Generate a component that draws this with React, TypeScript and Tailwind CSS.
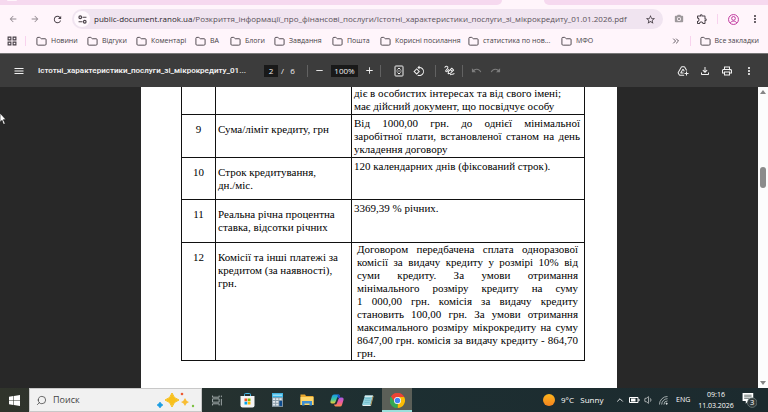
import type { ReactNode } from 'react'
import {
  MdAdd,
  MdAddToDrive,
  MdArrowBack,
  MdArrowForward,
  MdMenu,
  MdMoreVert,
  MdOutlineExtension,
  MdOutlineFileDownload,
  MdOutlinePrint,
  MdOutlineRotate90DegreesCcw,
  MdPhotoCamera,
  MdRedo,
  MdRefresh,
  MdRemove,
  MdStarBorder,
  MdUndo,
} from 'react-icons/md'
import { ChevronUp, ChevronsRight, Folder, Search, Volume1 } from 'lucide-react'

const BOOKMARKS = [
  { label: 'Новини', width: 'w-[51px]' },
  { label: 'Відгуки', width: 'w-[49px]' },
  { label: 'Коментарі', width: 'w-[59px]' },
  { label: 'ВА', width: 'w-[35px]' },
  { label: 'Блоги', width: 'w-[44px]' },
  { label: 'Завдання', width: 'w-[58px]' },
  { label: 'Пошта', width: 'w-[48px]' },
  { label: 'Корисні посилання', width: 'w-[88px]' },
  { label: 'статистика по нов...', width: 'w-[93px]' },
  { label: 'МФО', width: 'w-[40px]' },
]

const ROWS = [
  {
    num: '',
    height: 'h-[27px]',
    pad: 'pt-0 pl-[2px] pr-1',
    title: [],
    text: ['діє в особистих інтересах та від свого імені;', 'має дійсний документ, що посвідчує особу'],
    justify: false,
  },
  {
    num: '9',
    height: 'h-[43px]',
    pad: 'pt-[2px] pl-[2px] pr-1',
    title: ['Сума/ліміт кредиту, грн'],
    text: ['Від 1000,00 грн. до однієї мінімальної', 'заробітної плати, встановленої станом на день', 'укладення договору'],
    justify: true,
  },
  {
    num: '10',
    height: 'h-[42px]',
    pad: 'pt-[2px] pl-[2px] pr-1',
    title: ['Строк кредитування,', 'дн./міс.'],
    text: ['120 календарних днів (фіксований строк).'],
    justify: false,
  },
  {
    num: '11',
    height: 'h-[43px]',
    pad: 'pt-[2px] pl-[2px] pr-1',
    title: ['Реальна річна процентна', 'ставка, відсотки річних'],
    text: ['3369,39 % річних.'],
    justify: false,
  },
  {
    num: '12',
    height: 'h-[117px]',
    pad: 'pt-0 pl-[5px] pr-[6px]',
    title: ['Комісії та інші платежі за', 'кредитом (за наявності),', 'грн.'],
    text: [
      'Договором передбачена сплата одноразової',
      'комісії за видачу кредиту у розмірі 10% від',
      'суми кредиту. За умови отримання',
      'мінімального розміру кредиту на суму',
      '1 000,00 грн. комісія за видачу кредиту',
      'становить 100,00 грн. За умови отримання',
      'максимального розміру мікрокредиту на суму',
      '8647,00 грн. комісія за видачу кредиту - 864,70',
      'грн.',
    ],
    justify: true,
  },
]

function IconButton({ label, className = 'w-[22px]', children }: { label: string; className?: string; children: ReactNode }) {
  return (
    <button aria-label={label} className={`flex h-5 shrink-0 items-center justify-center ${className}`}>
      {children}
    </button>
  )
}

export default function App() {
  return (
    <div className="flex h-screen flex-col overflow-hidden bg-[#fff5fb] font-['Open_Sans','Noto_Sans',sans-serif]">
      <TabStrip />
      <AddressBar />
      <BookmarksBar />
      <PdfToolbar />
      <div className="flex min-h-0 flex-1 bg-[#282828]">
        <PdfPage />
        <Scrollbar />
      </div>
      <Taskbar />
    </div>
  )
}

function TabStrip() {
  return (
    <div className="flex h-[5px] shrink-0">
      <div className="flex flex-[500] items-start rounded-br-md bg-[#f6d9ef] pl-[7px]">
        <div className="h-px w-[10px] rounded-b bg-[#fff5fb]" />
      </div>
      <div className="flex-[42]" />
      <div className="flex-[226] rounded-bl-md bg-[#f6d9ef]" />
    </div>
  )
}

function AddressBar() {
  return (
    <div className="flex h-7 shrink-0 items-center pr-0.5 pl-0.5 text-[#4b434a]">
      <IconButton label="Назад">
        <MdArrowBack className="size-[10px] text-[#948b92]" />
      </IconButton>
      <IconButton label="Вперед">
        <MdArrowForward className="size-[10px] text-[#948b92]" />
      </IconButton>
      <IconButton label="Оновити">
        <MdRefresh className="size-[11px]" />
      </IconButton>
      <div className="ml-1 flex h-5 min-w-0 flex-1 items-center rounded-full bg-[#f0e4f0] px-[2px]">
        <button aria-label="Дані сайту" className="flex size-4 shrink-0 items-center justify-center rounded-full bg-[#fff9fd]">
          <svg viewBox="0 0 16 16" className="size-[9px]" fill="none" stroke="currentColor" strokeWidth="2">
            <circle cx="4" cy="4" r="2.4" />
            <path d="M8 4h7M1 12h7" />
            <circle cx="12" cy="12" r="2.4" />
          </svg>
        </button>
        <p className="ml-1 min-w-0 flex-1 overflow-hidden text-[8px] leading-4 whitespace-nowrap text-[#5a525a]">
          <span className="text-[#2c272d]">public-document.ranok.ua</span>
          /Розкриття_інформації_про_фінансові_послуги/Істотні_характеристики_послуги_зі_мікрокредиту_01.01.2026.pdf
        </p>
        <IconButton label="Додати закладку">
          <MdStarBorder className="size-[11px]" />
        </IconButton>
      </div>
      <IconButton label="Знімок екрана" className="ml-1 w-6">
        <MdPhotoCamera className="size-[10px] text-[#9d989b]" />
      </IconButton>
      <IconButton label="Розширення">
        <MdOutlineExtension className="size-3" />
      </IconButton>
      <div className="mx-1 h-[10px] w-px bg-[#f8d3ee]" />
      <IconButton label="Профіль">
        <svg viewBox="0 0 20 20" className="size-[11px]" fill="none" stroke="#c0399f" strokeWidth="1.8">
          <circle cx="10" cy="10" r="9" />
          <circle cx="10" cy="8" r="3.4" />
          <path d="M4 16c3-4 9-4 12 0" />
        </svg>
      </IconButton>
      <IconButton label="Меню">
        <MdMoreVert className="size-3" />
      </IconButton>
    </div>
  )
}

function BookmarksBar() {
  return (
    <nav className="flex h-5 shrink-0 items-center pb-1 text-[7px] leading-4 text-[#463f46]">
      <button aria-label="Програми" className="ml-[7px] shrink-0">
        <svg viewBox="0 0 18 18" className="size-[10px]" fill="none" stroke="currentColor" strokeWidth="2">
          <path d="M2 2h5v5H2zM11 2h5v5h-5zM2 11h5v5H2zM11 11h5v5h-5z" />
        </svg>
      </button>
      <div className="mx-2 h-[10px] w-px shrink-0 bg-[#f8d3ee]" />
      <div className="ml-0.5 flex min-w-0 flex-1 overflow-hidden">
        {BOOKMARKS.map(({ label, width }) => (
          <a key={label} href="#" className={`flex shrink-0 items-center gap-1 whitespace-nowrap ${width}`}>
            <Folder className="size-[11px] shrink-0" strokeWidth={2} />
            {label}
          </a>
        ))}
      </div>
      <button aria-label="Більше закладок">
        <ChevronsRight className="size-[10px]" />
      </button>
      <div className="mx-[9px] h-[10px] w-px bg-[#f8d3ee]" />
      <a href="#" className="flex items-center gap-1 pr-[9px] whitespace-nowrap">
        <Folder className="size-[11px]" strokeWidth={2} />
        Все закладки
      </a>
    </nav>
  )
}

function PdfToolbar() {
  return (
    <header className="flex h-[34px] shrink-0 items-center border-t border-[#777] bg-[#3c3c3c] pr-2 pl-2 text-[8px] text-[#f1f1f1]">
      <IconButton label="Меню документа">
        <MdMenu className="size-3" />
      </IconButton>
      <h1 className="ml-2 w-[222px] shrink-0 font-[Roboto,sans-serif] text-[8px] font-semibold whitespace-nowrap">
        Істотні_характеристики_послуги_зі_мікрокредиту_01...
      </h1>
      <input aria-label="Сторінка" defaultValue="2" className="ml-1 h-3 w-[14px] bg-[#191919] text-center" />
      <span className="ml-[3px] w-[26px] whitespace-pre">/   6</span>
      <Divider />
      <IconButton label="Зменшити">
        <MdRemove className="size-[11px]" />
      </IconButton>
      <input aria-label="Масштаб" defaultValue="100%" className="ml-px h-3 w-[27px] bg-[#191919] text-center font-medium" />
      <IconButton label="Збільшити">
        <MdAdd className="size-[11px]" />
      </IconButton>
      <Divider />
      <IconButton label="За розміром сторінки" className="ml-2 w-5">
        <svg viewBox="0 0 20 24" className="h-3 w-[10px]" fill="none" stroke="currentColor" strokeWidth="2">
          <rect x="2" y="2" width="16" height="20" rx="1.5" />
          <path d="m7 9 3-3 3 3M7 15l3 3 3-3M5 12h2M9 12h2M13 12h2" />
        </svg>
      </IconButton>
      <IconButton label="Повернути" className="w-[19px]">
        <MdOutlineRotate90DegreesCcw className="size-3" />
      </IconButton>
      <div className="w-[7px]" />
      <Divider />
      <IconButton label="Малювати" className="w-[26px]">
        <svg viewBox="0 0 24 24" className="size-[11px]" fill="none" stroke="currentColor" strokeWidth="2.2" strokeLinecap="round" strokeLinejoin="round">
          <path d="M2 5c3-4 8-2 6 2-1 3-6 4-4 7 2 2 4-1 6-4" />
          <path d="m9 19 1-5 7-7 4 4-7 7zM14 10l4 4" />
          <path d="M14 21c3-2 5 1 8-2" />
        </svg>
      </IconButton>
      <Divider />
      <IconButton label="Скасувати" className="ml-[3px] w-5">
        <MdUndo className="size-[11px] text-[#7d7d7d]" />
      </IconButton>
      <IconButton label="Повторити" className="w-[18px]">
        <MdRedo className="size-[11px] text-[#7d7d7d]" />
      </IconButton>
      <div className="flex-1" />
      <IconButton label="Зберегти на Диск">
        <MdAddToDrive className="size-3" />
      </IconButton>
      <IconButton label="Завантажити">
        <MdOutlineFileDownload className="size-3" />
      </IconButton>
      <IconButton label="Друк">
        <MdOutlinePrint className="size-3" />
      </IconButton>
      <IconButton label="Більше дій">
        <MdMoreVert className="size-3" />
      </IconButton>
    </header>
  )
}

function Divider() {
  return <div className="h-3 w-px shrink-0 bg-[#626262]" />
}

function PdfPage() {
  return (
    <main className="flex min-w-0 flex-1 justify-center overflow-hidden">
      <div className="flex w-[476px] shrink-0 items-start bg-white pl-10">
        <table className="w-[404px] table-fixed border-collapse font-['Liberation_Serif',serif] text-[11px] leading-[13px] text-black">
          <colgroup>
            <col className="w-[34px]" />
            <col className="w-[136px]" />
            <col className="w-[233px]" />
          </colgroup>
          <tbody>
            {ROWS.map(({ num, height, pad, title, text, justify }) => (
              <tr key={num} className={`align-top ${height}`}>
                <td className="border border-t-0 border-[#111] p-0 pt-2 text-center">{num}</td>
                <td className="border border-t-0 border-[#111] p-0 pt-2 pl-[2px]">
                  {title.map((line) => (
                    <span key={line} className="block whitespace-nowrap">
                      {line}
                    </span>
                  ))}
                </td>
                <td className={`border border-t-0 border-[#111] ${pad}`}>
                  {text.map((line, i) => (
                    <span
                      key={line}
                      className={justify && i < text.length - 1 ? 'block [text-align-last:justify]' : 'block whitespace-nowrap'}
                    >
                      {line}
                    </span>
                  ))}
                </td>
              </tr>
            ))}
          </tbody>
        </table>
      </div>
      <svg viewBox="0 0 12 18" className="absolute top-[113px] left-0 h-3 w-2">
        <path d="M0 0v14l3-3 2 6 3-1-3-6h4z" fill="#fff" stroke="#111" />
      </svg>
    </main>
  )
}

function Scrollbar() {
  return (
    <div className="flex w-[10px] shrink-0 flex-col items-center bg-[#fcfcfc] py-[3px]">
      <svg viewBox="0 0 6 4" className="h-1 w-[6px]">
        <path d="M3 0l3 4H0z" fill="#858585" />
      </svg>
      <div className="mt-[73px] h-[21px] w-[6px] rounded-full bg-[#8b8b8b]" />
      <div className="flex-1" />
      <svg viewBox="0 0 6 4" className="h-1 w-[6px]">
        <path d="M0 0h6L3 4z" fill="#858585" />
      </svg>
    </div>
  )
}

function TaskIcon({ label, children }: { label: string; children: ReactNode }) {
  return (
    <button aria-label={label} className="flex h-6 w-[30px] shrink-0 items-center justify-center">
      {children}
    </button>
  )
}

function Taskbar() {
  return (
    <footer className="flex h-6 shrink-0 items-center bg-linear-to-r from-[#30342b] via-[#1d2f32] to-[#1c2a2e] text-[7px] text-white">
      <button aria-label="Пуск" className="flex w-[29px] shrink-0 justify-center">
        <svg viewBox="0 0 20 20" className="size-[11px]" fill="#fff">
          <path d="M0 3l8-1.200v7.700H0zM9 1.600 20 0v9.500H9zM0 10.500h8v7.700L0 17zM9 10.500h11V20L9 18.400z" />
        </svg>
      </button>
      <label className="flex h-6 w-[173px] shrink-0 items-center border border-[#c8c8c8] bg-[#f1f1f1] pl-[6px] text-[#333]">
        <Search className="size-[11px] shrink-0 -scale-x-100" strokeWidth={1.5} />
        <input aria-label="Поиск" placeholder="Поиск" className="ml-[6px] w-20 min-w-0 flex-1 bg-transparent text-[9px] placeholder:text-[#444]" />
        <svg viewBox="0 0 38 18" className="mr-[6px] h-[18px] w-[38px] shrink-0">
          <path d="M15 2q1.500 5.500 7 7-5.500 1.500-7 7-1.500-5.500-7-7 5.500-1.500 7-7" fill="#f8c01c" stroke="#f8c01c" strokeWidth="1" strokeLinejoin="round" />
          <path d="M28 7q1 3 4 4-3 1-4 4-1-3-4-4 3-1 4-4" fill="#f8bd34" />
          <path d="M3 11q1 2 3 3-2 1-3 3-1-2-3-3 2-1 3-3" fill="#1b9de2" stroke="#1b9de2" strokeWidth=".6" />
          <circle cx="25" cy="3" r="1.300" fill="#ed5a32" />
          <circle cx="36" cy="15" r="1.200" fill="#7cc142" />
        </svg>
      </label>
      <TaskIcon label="Подання завдань">
        <svg viewBox="0 0 20 20" className="size-[11px]" fill="none" stroke="#b9c1c1" strokeWidth="1.500">
          <path d="M1 1v3h12V1M1 19v-3h12v3M1 7h12v6H1zM17 1v3M17 7v12" />
        </svg>
      </TaskIcon>
      <TaskIcon label="Microsoft Store">
        <svg viewBox="0 0 30 30" className="size-[15px]">
          <path d="M9 7V3q0-2 2-2h8q2 0 2 2v4" fill="none" stroke="#45b9e8" strokeWidth="2" />
          <path d="M1 6h28v19q0 4-4 4H5q-4 0-4-4z" fill="#f4f4f4" />
          <path d="M9 11h5.500v5.500H9z" fill="#f25022" />
          <path d="M15.500 11H21v5.500h-5.500z" fill="#7fba00" />
          <path d="M9 17.500h5.500V23H9z" fill="#00a4ef" />
          <path d="M15.500 17.500H21V23h-5.500z" fill="#ffb900" />
        </svg>
      </TaskIcon>
      <TaskIcon label="Калькулятор">
        <svg viewBox="0 0 24 30" className="h-[14px] w-[11px]">
          <path d="M0 0h24v30H0z" fill="#8a9ca8" />
          <path d="M0 0h24v9H0z" fill="#3cb7e8" />
          <path d="M2 3h20v3H2z" fill="#a4e2f7" />
          <path d="M2 11h5v4H2zM9 11h5v4H9zM16 11h5v4h-5zM2 17h5v4H2zM9 17h5v4H9zM2 23h5v4H2zM9 23h5v4H9z" fill="#e3e9ee" />
          <path d="M16 17h6v11h-6z" fill="#0d4c8f" />
        </svg>
      </TaskIcon>
      <TaskIcon label="Провідник">
        <svg viewBox="0 0 28 24" className="h-3 w-[14px]">
          <path d="M1 1h9l2 3h14q1 0 1 1v17H1z" fill="#e8a72e" />
          <path d="M1 6h26v16H1z" fill="#ffd76a" />
          <path d="M4 14h20v9h-5v-4h-10v4H4z" fill="#3f8fd2" />
        </svg>
      </TaskIcon>
      <TaskIcon label="Copilot">
        <svg viewBox="0 0 28 26" className="h-[13px] w-[14px]">
          <defs>
            <linearGradient id="copilotLeft" x1="0" y1="0" x2="0" y2="1">
              <stop offset="0" stopColor="#1597e8" />
              <stop offset=".55" stopColor="#3fc6a0" />
              <stop offset="1" stopColor="#f5cf2d" />
            </linearGradient>
            <linearGradient id="copilotRight" x1="0" y1="0" x2="0" y2="1">
              <stop offset="0" stopColor="#a55be6" />
              <stop offset=".5" stopColor="#ec5a9e" />
              <stop offset="1" stopColor="#fb8b45" />
            </linearGradient>
          </defs>
          <path d="M8 1h9q2 0 3 4h-3q-2 0-3 3l-3 8q-1 3-4 3H4q-4 0-3-5L4 4q1-3 4-3" fill="url(#copilotLeft)" />
          <path d="M20 25h-9q-2 0-3-4h3q2 0 3-3l3-8q1-3 4-3h3q4 0 3 5l-3 10q-1 3-4 3" fill="url(#copilotRight)" />
          <path d="M15 1h2q2 0 3 4l1 3h-5z" fill="#2448c4" />
        </svg>
      </TaskIcon>
      <TaskIcon label="Блокнот">
        <svg viewBox="0 0 26 26" className="size-[13px]">
          <path d="M8 3h16l-5 19H2z" fill="#8fd0dc" />
          <path d="M8 3h16l-1 3H7z" fill="#d9eef0" />
          <path d="m24 3 1 2-5 19-1-2z" fill="#d6a65c" />
          <path d="m2 22 17 0 1 2H4z" fill="#e6eded" />
          <path d="M9 9h10M8 13h10M7 17h10" stroke="#60adbe" />
        </svg>
      </TaskIcon>
      <button aria-label="Google Chrome" className="flex h-6 w-[30px] shrink-0 items-center justify-center border-b-2 border-[#9be0dc] bg-[#5b5f58]">
        <svg viewBox="0 0 30 30" className="mt-[2px] size-[15px]">
          <path d="M15 15 2 7.500A15 15 0 0 1 28 7.500z" fill="#ea4335" />
          <path d="M15 15 28 7.500A15 15 0 0 1 15 30z" fill="#fbbc05" />
          <path d="M15 15v15A15 15 0 0 1 2 7.500z" fill="#34a853" />
          <path d="M15 8h13l-6.500 11z" fill="#fbbc05" />
          <path d="M15 8h13.300Q24 0 15 0 6.500 0 2 7.500L9 18z" fill="#ea4335" />
          <path d="m2 7.500 7 11.500 6 3-3 8A15 15 0 0 1 2 7.500" fill="#34a853" />
          <circle cx="15" cy="15" r="7" fill="#fff" />
          <circle cx="15" cy="15" r="5.500" fill="#4285f4" />
        </svg>
      </button>
      <div className="flex-1" />
      <div className="size-3 shrink-0 rounded-full bg-linear-to-b from-[#fdb51b] to-[#f5831f]" />
      <span className="ml-[6px] w-[53px] shrink-0 text-[8px] whitespace-pre">9°C   Sunny</span>
      <button aria-label="Приховані піктограми" className="ml-px w-[14px]">
        <ChevronUp className="size-[10px]" strokeWidth={2} />
      </button>
      <svg viewBox="0 0 22 12" className="h-[6px] w-[11px] shrink-0">
        <path d="M1 1h17v10H1z" fill="none" stroke="#fff" strokeWidth="2" />
        <path d="M4 3h9v6H4zM19 4h2v4h-2z" fill="#fff" />
      </svg>
      <Volume1 className="ml-1 size-[10px] shrink-0" strokeWidth={1.5} />
      <svg viewBox="0 0 20 20" className="ml-[5px] size-[9px] shrink-0" fill="none" stroke="#dfe5e5" strokeWidth="1.500">
        <path d="M1 19A18 18 0 0 1 19 1M6 19A13 13 0 0 1 19 6M11 19a8 8 0 0 1 8-8" />
        <circle cx="17" cy="17" r="1.500" fill="#fff" />
      </svg>
      <span className="ml-2 w-[18px] shrink-0">ENG</span>
      <div className="flex w-[44px] shrink-0 flex-col text-center leading-[11px]">
        <span>09:16</span>
        <span>11.03.2026</span>
      </div>
      <button aria-label="Сповіщення" className="mr-[11px] ml-1 shrink-0">
        <svg viewBox="0 0 28 30" className="h-4 w-[15px]">
          <path d="M1 2h20v15h-9l-5 5v-5H1z" fill="#fff" />
          <path d="M4 6h14M4 9h14M4 12h10" stroke="#56615f" strokeWidth="1.500" />
          <circle cx="19" cy="20" r="9" fill="#333c3d" stroke="#899" />
          <text x="19" y="25" textAnchor="middle" fontSize="14" fill="#fff">
            3
          </text>
        </svg>
      </button>
    </footer>
  )
}
